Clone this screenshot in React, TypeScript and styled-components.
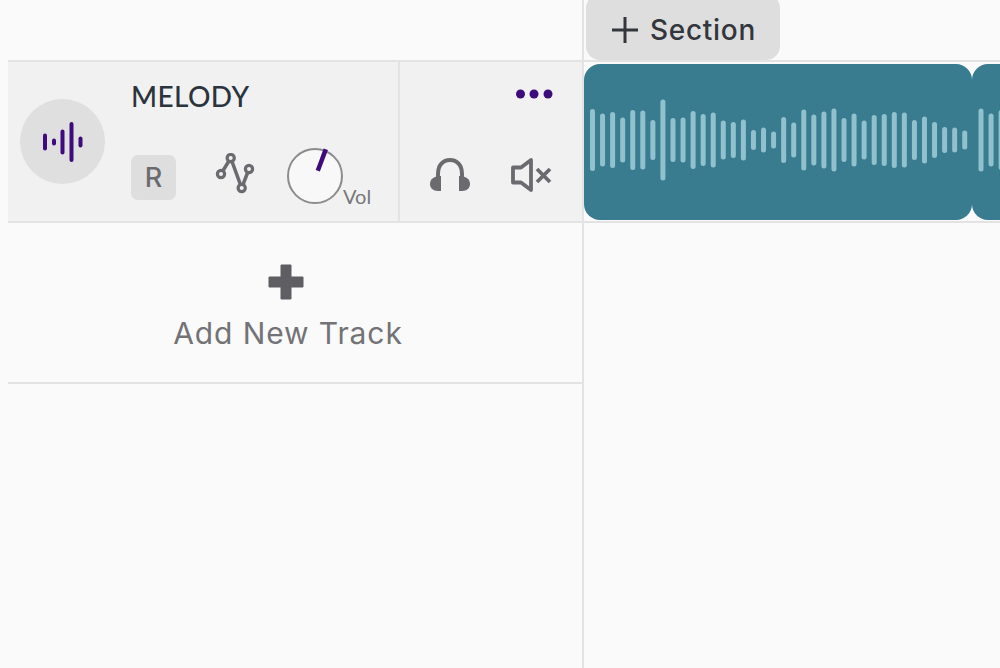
import React, { FC } from 'react';
import styled, { createGlobalStyle } from 'styled-components';

const colors = {
  page: '#fafafa',
  line: '#e3e3e3',
  row: '#f1f1f1',
  chip: '#dedede',
  ink: '#2b343c',
  grey: '#6b6b6f',
  purple: '#3f0a7c',
  clip: '#397c90',
  wave: '#90c1cd',
};

const GlobalStyle = createGlobalStyle`
  html, body {
    margin: 0;
    padding: 0;
    background: ${colors.page};
  }
`;

const Page = styled.div`
  display: flex;
  height: 668px;
  padding-left: 8px;
  overflow: hidden;
  box-sizing: border-box;
  font-family: Inter, 'Liberation Sans', sans-serif;
`;

const TrackColumn = styled.div`
  flex: 0 0 576px;
  box-sizing: border-box;
  border-right: 2px solid ${colors.line};
`;

const TimelineColumn = styled.div`
  flex: 1;
  min-width: 0;
`;

const HeaderBar = styled.div`
  display: flex;
  align-items: flex-start;
  height: 62px;
  box-sizing: border-box;
  border-bottom: 2px solid ${colors.line};
`;

const SectionButton = styled.button`
  display: flex;
  align-items: center;
  gap: 12px;
  width: 194px;
  height: 66px;
  margin: -6px 0 0 2px;
  padding: 6px 0 0 26px;
  box-sizing: border-box;
  border: none;
  border-radius: 14px;
  background: ${colors.chip};
  color: #33373d;
  font-family: inherit;
  font-size: 28px;
  font-weight: 450;
  letter-spacing: 0.7px;
`;

const TrackRow = styled.div`
  display: flex;
  height: 161px;
  box-sizing: border-box;
  border-bottom: 2px solid ${colors.line};
  background: ${colors.row};
`;

const TrackMain = styled.div`
  flex: 0 0 392px;
  display: flex;
  box-sizing: border-box;
  padding-left: 12px;
  border-right: 2px solid ${colors.line};
`;

const Avatar = styled.div`
  flex: 0 0 85px;
  height: 85px;
  margin-top: 37px;
  display: flex;
  align-items: center;
  justify-content: center;
  border-radius: 50%;
  background: #dfdfdf;
`;

const TrackInfo = styled.div`
  margin-left: 26px;
  padding-top: 17px;
`;

const TrackName = styled.div`
  font-family: Lato, sans-serif;
  font-size: 28px;
  font-weight: 500;
  letter-spacing: 0.4px;
  line-height: 34px;
  color: ${colors.ink};
`;

const TrackControls = styled.div`
  display: flex;
  align-items: flex-start;
  margin-top: 42px;
`;

const RecordButton = styled.div`
  width: 45px;
  height: 45px;
  display: flex;
  align-items: center;
  justify-content: center;
  border-radius: 7px;
  background: ${colors.chip};
  color: ${colors.grey};
  font-size: 27px;
  font-weight: 500;
`;

const AutomationIcon = styled.svg`
  margin-left: 39px;
  margin-top: -2px;
`;

const Knob = styled.div`
  position: relative;
  margin-left: 32px;
  margin-top: -7px;
  width: 56px;
  height: 56px;
`;

const KnobLabel = styled.span`
  position: absolute;
  left: 56px;
  top: 37px;
  font-family: Lato, sans-serif;
  font-size: 20px;
  line-height: 22px;
  color: #77777b;
`;

const TrackSide = styled.div`
  flex: 1;
  display: flex;
  flex-direction: column;
  padding: 24px 29px 0 29px;
`;

const MoreDots = styled.svg`
  align-self: flex-end;
`;

const SideIcons = styled.div`
  display: flex;
  justify-content: space-between;
  margin-top: 55px;
`;

const AddTrack = styled.div`
  height: 161px;
  box-sizing: border-box;
  padding: 41px 18px 0 0;
  border-bottom: 2px solid ${colors.line};
  display: flex;
  flex-direction: column;
  align-items: center;
  color: #737377;
  font-size: 30px;
  letter-spacing: 0.9px;
`;

const AddLabel = styled.div`
  margin: 15px 0 0 4px;
  line-height: 36px;
`;

const Lane = styled.div`
  display: flex;
  height: 161px;
  box-sizing: border-box;
  padding: 2px 0;
  border-bottom: 2px solid ${colors.line};
`;

const Clip = styled.div<{ $width: number }>`
  flex: 0 0 ${({ $width }) => $width}px;
  height: 156px;
  border-radius: 16px;
  background: ${colors.clip};
  overflow: hidden;
`;

const FIRST_CLIP = [
  62, 53, 56, 45, 60, 59, 40, 81, 44, 45, 58, 52, 55, 39, 36, 41, 20, 25, 17, 46,
  35, 61, 51, 57, 63, 44, 53, 39, 50, 52, 56, 55, 40, 47, 36, 26, 25, 19,
];
const SECOND_CLIP = [63, 53, 60];

const Waveform: FC<{ bars: number[]; start: number; width: number }> = ({ bars, start, width }) => (
  <svg width={width} height={156} viewBox={`0 0 ${width} 156`}>
    {bars.map((h, i) => (
      <rect
        key={i}
        x={start + i * 10.06 - 2.5}
        y={76 - h / 2}
        width={5}
        height={h}
        rx={2.5}
        fill={colors.wave}
      />
    ))}
  </svg>
);

const AVATAR_BARS = [
  [8, 17],
  [17, 7],
  [25.5, 25],
  [34.5, 40],
  [43.5, 11],
];

const App: FC = () => (
  <>
    <GlobalStyle />
    <Page>
      <TrackColumn>
        <HeaderBar />
        <TrackRow>
          <TrackMain>
            <Avatar>
              <svg width={52} height={44} viewBox="0 0 52 44">
                {AVATAR_BARS.map(([x, h]) => (
                  <rect
                    key={x}
                    x={x - 2}
                    y={22 - h / 2}
                    width={4}
                    height={h}
                    rx={2}
                    fill={colors.purple}
                  />
                ))}
              </svg>
            </Avatar>
            <TrackInfo>
              <TrackName>MELODY</TrackName>
              <TrackControls>
                <RecordButton>R</RecordButton>
                <AutomationIcon width={40} height={42} viewBox="0 0 40 42">
                  <path
                    d="M6 21 L15.7 5 L26.7 35 L34 16"
                    fill="none"
                    stroke={colors.grey}
                    strokeWidth={3.5}
                  />
                  {[
                    [6, 21],
                    [15.7, 5],
                    [26.7, 35],
                    [34, 16],
                  ].map(([cx, cy]) => (
                    <circle
                      key={cx}
                      cx={cx}
                      cy={cy}
                      r={3.6}
                      fill={colors.row}
                      stroke={colors.grey}
                      strokeWidth={3.2}
                    />
                  ))}
                </AutomationIcon>
                <Knob>
                  <svg width={56} height={56} viewBox="0 0 56 56">
                    <circle cx={28} cy={28} r={27} fill="#f8f8f8" stroke="#8c8c8c" strokeWidth={2} />
                    <line x1={30.8} y1={22.7} x2={38.8} y2={1.3} stroke={colors.purple} strokeWidth={4.5} />
                  </svg>
                  <KnobLabel>Vol</KnobLabel>
                </Knob>
              </TrackControls>
            </TrackInfo>
          </TrackMain>
          <TrackSide>
            <MoreDots width={38} height={16} viewBox="0 0 38 16">
              <circle cx={5.5} cy={8} r={4.5} fill={colors.purple} />
              <circle cx={19} cy={8} r={4.5} fill={colors.purple} />
              <circle cx={33} cy={8} r={4.5} fill={colors.purple} />
            </MoreDots>
            <SideIcons>
              <svg width={42} height={36} viewBox="0 0 42 36">
                <path d="M9 24 V17 C9 8 14 3 21 3 C28 3 33 8 33 17 V24" fill="none" stroke={colors.grey} strokeWidth={4} />
                <path d="M12 19 V34 H9 C4 34 1 31 1 27 C1 22 5 19 12 19 Z" fill={colors.grey} />
                <path d="M30 19 V34 H33 C38 34 41 31 41 27 C41 22 37 19 30 19 Z" fill={colors.grey} />
              </svg>
              <svg width={42} height={36} viewBox="0 0 42 36">
                <path d="M2 10.5 H10 L20 3 V33 L10 25.5 H2 Z" fill="none" stroke={colors.grey} strokeWidth={3.8} strokeLinejoin="round" />
                <path d="M26 12 L39 25 M39 12 L26 25" stroke={colors.grey} strokeWidth={3.8} />
              </svg>
            </SideIcons>
          </TrackSide>
        </TrackRow>
        <AddTrack>
          <svg width={36} height={36} viewBox="0 0 36 36">
            <path d="M13 1 H23 V13 H35 V23 H23 V35 H13 V23 H1 V13 H13 Z" fill="#5f5f63" stroke="#5f5f63" strokeWidth={1} strokeLinejoin="round" />
          </svg>
          <AddLabel>Add New Track</AddLabel>
        </AddTrack>
      </TrackColumn>
      <TimelineColumn>
        <HeaderBar>
          <SectionButton>
            <svg width={26} height={26} viewBox="0 0 26 26">
              <path d="M0 13 H26 M13 0 V26" stroke="#33373d" strokeWidth={3} />
            </svg>
            Section
          </SectionButton>
        </HeaderBar>
        <Lane>
          <Clip $width={388}>
            <Waveform bars={FIRST_CLIP} start={8.5} width={388} />
          </Clip>
          <Clip $width={60}>
            <Waveform bars={SECOND_CLIP} start={9} width={60} />
          </Clip>
        </Lane>
      </TimelineColumn>
    </Page>
  </>
);

export default App;
